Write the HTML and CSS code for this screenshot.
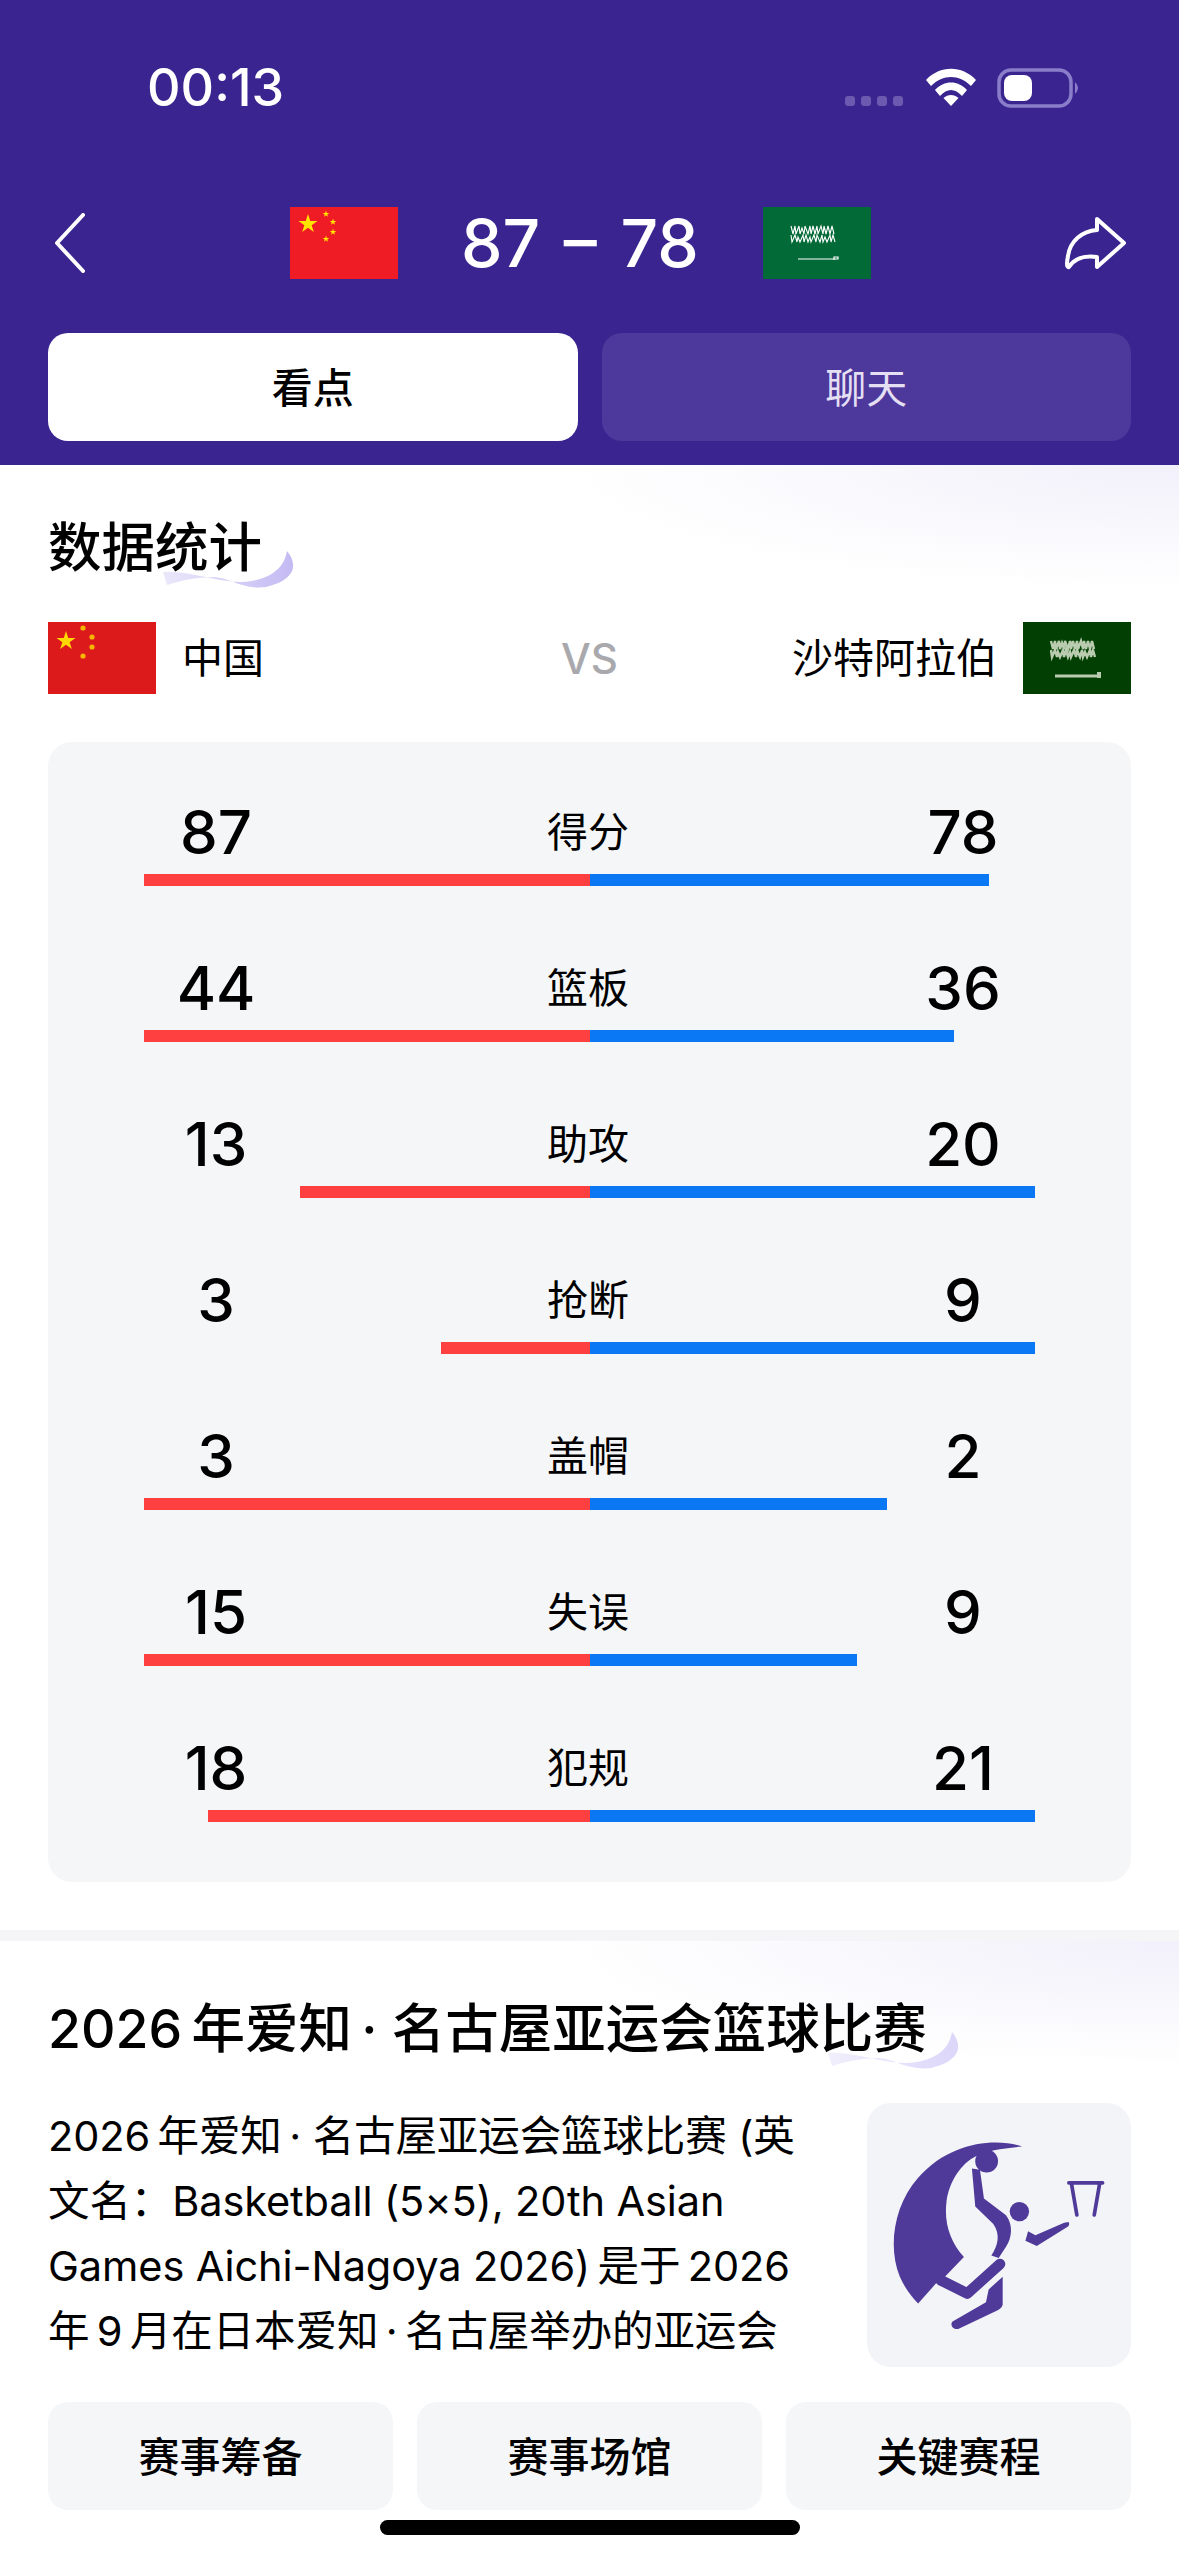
FILE: index.html
```html
<!DOCTYPE html>
<html lang="zh-CN">
<head>
<meta charset="utf-8">
<title>87 - 78</title>
<link rel="stylesheet" href="styles.css">
</head>
<body>
<svg class="defs" width="0" height="0"><defs><polygon id="star" points="0,-1 .225,-.309 .951,-.309 .363,.118 .588,.809 0,.382 -.588,.809 -.363,.118 -.951,-.309 -.225,-.309"/><path id="shahada" d="M28 19 l2 8 l2 -8 l1 8 l3 -8 l1 8 l2 -6 l2 6 l1 -8 l3 8 l2 -8 l1 8 l2 -8 l2 8 l2 -8 l1 8 l3 -8 l2 8 l1 -8 l2 8 l2 -8 l2 8 l2 -8 l2 8 M28 28 l1 7 l3 -7 l2 7 l1 -5 l2 5 l3 -7 l1 7 l2 -7 l2 7 l2 -5 l1 5 l3 -7 l2 7 l1 -7 l3 7 l2 -7 l1 7 l2 -5 l2 5 l3 -7 l1 7 l2 -7 l2 7"/></defs></svg>
<div class="page">
  <header class="top">
    <div class="status">
      <span class="time">00:13</span>
      <div class="status-icons">
        <div class="signal"><i></i><i></i><i></i><i></i></div>
        <svg class="wifi" viewBox="0 0 50 38"><path fill="#fff" d="M0 12 C14 -3 36 -3 50 12 L45 18 C33 6 17 6 5 18Z M9 22 C18 12 32 12 41 22 L36 28 C29 20 21 20 14 28Z M17.500 30 C22 26 28 26 32.500 30 L25 38Z"/></svg>
        <svg class="battery" viewBox="0 0 84 40"><rect x="2" y="2" width="72" height="36" rx="12" fill="none" stroke="#8a7dc9" stroke-width="3.500"/><rect x="7" y="7" width="28" height="26" rx="8" fill="#fff"/><path fill="#8a7dc9" d="M78 14 Q84 20 78 26Z"/></svg>
      </div>
    </div>
    <nav class="nav">
      <svg class="back" viewBox="0 0 32 60"><path d="M29 2 L3 30 L29 58" fill="none" stroke="#fff" stroke-width="4" stroke-linecap="round" stroke-linejoin="round"/></svg>
      <div class="score">
        <svg class="flag" viewBox="0 0 108 72"><rect width="108" height="72" fill="#f01c25"/><g fill="#ffe600"><use href="#star" transform="translate(18 17) scale(10)"/><use href="#star" transform="translate(36 7) scale(3.500)"/><use href="#star" transform="translate(43 15) scale(3.500)"/><use href="#star" transform="translate(43 25) scale(3.500)"/><use href="#star" transform="translate(36 32) scale(3.500)"/></g></svg>
        <span class="score-text">87 – 78</span>
        <svg class="flag" viewBox="0 0 108 72"><rect width="108" height="72" fill="#026a37"/><g fill="none" stroke="#fff"><use href="#shahada" stroke-width="1.100"/><path d="M35 52 H75 V50 H71 V53" stroke-width="1.200"/></g></svg>
      </div>
      <svg class="share" viewBox="0 0 64 54"><path d="M33 3 L60 27 L33 51 V41 C20 39 10 43 5 51 C2 52 3 45 4 40 C6 25 18 15 33 14 Z" fill="none" stroke="#fff" stroke-width="4" stroke-linejoin="round"/></svg>
    </nav>
    <div class="tabs">
      <div class="tab tab-active">看点</div>
      <div class="tab tab-plain">聊天</div>
    </div>
  </header>

  <section class="panel">
    <h2 class="title"><span class="title-text">数据统计</span>
      <svg class="swoosh" viewBox="0 0 135 38"><defs><linearGradient id="sw1" x1="0" x2="1"><stop offset="0" stop-color="#ebe8fb"/><stop offset="1" stop-color="#c4baf3"/></linearGradient></defs><path fill="url(#sw1)" d="M1 22 C30 20 62 36 90 31 C110 27 122 18 125 1 C136 14 134 30 104 37 C80 40 66 27 52 27 C36 27 20 30 5 35Z"/></svg>
    </h2>
    <div class="teams">
      <div class="team">
        <svg class="flag" viewBox="0 0 108 72"><rect width="108" height="72" fill="#dc1a1c"/><use href="#star" fill="#ffd800" transform="translate(18 19) scale(10)"/><g fill="#f6b500"><circle cx="35" cy="6" r="2.600"/><circle cx="44" cy="15" r="2.600"/><circle cx="44" cy="25" r="2.600"/><circle cx="35" cy="34" r="2.600"/></g></svg>
        <span class="team-name">中国</span>
      </div>
      <span class="vs">VS</span>
      <div class="team team-end">
        <span class="team-name">沙特阿拉伯</span>
        <svg class="flag" viewBox="0 0 108 72"><rect width="108" height="72" fill="#013f02"/><g fill="none" stroke="#b9ccb0"><use href="#shahada" stroke-width="2.400"/><path d="M32 54 H76" stroke-width="3"/></g><path d="M74 50 h4 v6 h-4z" fill="#b9ccb0"/></svg>
      </div>
    </div>
    <div class="stats">
      <div class="stat"><div class="stat-head"><span class="num">87</span><span class="stat-label">得分</span><span class="num">78</span></div>
        <div class="bar"><div class="half half-left"><b class="fill-red" style="width:100%"></b></div><div class="half"><b class="fill-blue" style="width:89.700%"></b></div></div></div>
      <div class="stat"><div class="stat-head"><span class="num">44</span><span class="stat-label">篮板</span><span class="num">36</span></div>
        <div class="bar"><div class="half half-left"><b class="fill-red" style="width:100%"></b></div><div class="half"><b class="fill-blue" style="width:81.800%"></b></div></div></div>
      <div class="stat"><div class="stat-head"><span class="num">13</span><span class="stat-label">助攻</span><span class="num">20</span></div>
        <div class="bar"><div class="half half-left"><b class="fill-red" style="width:65%"></b></div><div class="half"><b class="fill-blue" style="width:100%"></b></div></div></div>
      <div class="stat"><div class="stat-head"><span class="num">3</span><span class="stat-label">抢断</span><span class="num">9</span></div>
        <div class="bar"><div class="half half-left"><b class="fill-red" style="width:33.300%"></b></div><div class="half"><b class="fill-blue" style="width:100%"></b></div></div></div>
      <div class="stat"><div class="stat-head"><span class="num">3</span><span class="stat-label">盖帽</span><span class="num">2</span></div>
        <div class="bar"><div class="half half-left"><b class="fill-red" style="width:100%"></b></div><div class="half"><b class="fill-blue" style="width:66.700%"></b></div></div></div>
      <div class="stat"><div class="stat-head"><span class="num">15</span><span class="stat-label">失误</span><span class="num">9</span></div>
        <div class="bar"><div class="half half-left"><b class="fill-red" style="width:100%"></b></div><div class="half"><b class="fill-blue" style="width:60%"></b></div></div></div>
      <div class="stat"><div class="stat-head"><span class="num">18</span><span class="stat-label">犯规</span><span class="num">21</span></div>
        <div class="bar"><div class="half half-left"><b class="fill-red" style="width:85.700%"></b></div><div class="half"><b class="fill-blue" style="width:100%"></b></div></div></div>
    </div>
  </section>

  <div class="divider"></div>

  <section class="panel panel-info">
    <h2 class="title"><span class="title-text">2026&#8201;年爱知&#8201;·&nbsp;名古屋亚运会篮球比赛</span>
      <svg class="swoosh" viewBox="0 0 135 38"><defs><linearGradient id="sw2" x1="0" x2="1"><stop offset="0" stop-color="#f1effc"/><stop offset="1" stop-color="#dcd6f9"/></linearGradient></defs><path fill="url(#sw2)" d="M1 22 C30 20 62 36 90 31 C110 27 122 18 125 1 C136 14 134 30 104 37 C80 40 66 27 52 27 C36 27 20 30 5 35Z"/></svg>
    </h2>
    <div class="intro">
      <p class="intro-text">2026&#8201;年爱知&#8201;·&nbsp;名古屋亚运会篮球比赛 (英文名：Basketball (5×5), 20th Asian Games Aichi-Nagoya 2026)&#8201;是于&#8201;2026 年&#8201;9&#8201;月在日本爱知&#8201;·&#8201;名古屋举办的亚运会</p>
      <div class="logo-tile">
        <svg class="logo" viewBox="52 36 790 790">
          <g fill="#4f3a9a">
            <path d="M516 166 C440 140 300 150 205 260 C130 345 115 470 150 555 C165 590 185 615 205 636 L262 572 L285 556 L342 497 C300 450 282 395 290 330 C298 270 335 215 378 195 C410 178 460 172 516 166Z"/>
            <circle cx="410" cy="210" r="34"/>
            <circle cx="508" cy="361" r="29"/>
            <path d="M366 232 L390 236 L402 322 L468 372 C490 400 486 440 468 466 L446 500 L424 492 C444 462 452 430 430 398 L376 346Z"/>
            <path d="M655 392 C660 400 655 405 650 408 L560 464 L526 448 L534 420 L556 432 L642 394Z"/>
            <path d="M458 556 L458 640 C455 650 448 654 440 658 L325 712 C312 716 298 700 308 690 L408 632 L416 594Z"/>
          </g>
          <path d="M450 518 L352 606 L272 566" fill="none" stroke="#4f3a9a" stroke-width="32" stroke-linecap="round" stroke-linejoin="round"/>
          <path d="M656 275 H757 M664 278 L680 371 M748 278 L732 371" fill="none" stroke="#4f3a9a" stroke-width="11" stroke-linecap="round"/>
        </svg>
      </div>
    </div>
    <div class="links">
      <div class="link">赛事筹备</div>
      <div class="link">赛事场馆</div>
      <div class="link">关键赛程</div>
    </div>
  </section>

  <div class="home-bar"></div>
</div>
</body>
</html>
```

FILE: styles.css
```css
* { box-sizing: border-box; }
html, body { margin: 0; padding: 0; background: #fff; }
body {
  font-family: Inter, "Noto Sans CJK SC", "Noto Sans", sans-serif;
  color: #000;
}
.defs { position: absolute; }
.page { position: relative; width: 1179px; height: 2556px; overflow: hidden; background: #fff; }

/* Header */
.top { background: #3a2590; height: 465px; padding: 0 48px; }
.status { display: flex; align-items: flex-start; height: 207px; padding-left: 99px; }
.time { color: #fff; font-size: 52px; line-height: 60px; font-weight: 500; margin-top: 58px; }
.status-icons { margin-left: auto; margin-top: 68px; margin-right: 50px; display: flex; align-items: flex-start; }
.signal { display: flex; gap: 6px; margin-top: 28px; margin-right: 23px; }
.signal i { display: block; width: 10px; height: 10px; border-radius: 3px; background: #6b5bb0; }
.wifi { display: block; width: 50px; height: 38px; margin-right: 21px; }
.battery { display: block; width: 84px; height: 40px; }

.nav { display: flex; align-items: center; height: 72px; }
.back { display: block; width: 32px; height: 60px; margin-left: 6px; flex: none; }
.score { display: flex; align-items: center; gap: 64px; margin-left: 204px; }
.flag { display: block; width: 108px; height: 72px; flex: none; }
.score-text { color: #fff; font-size: 66px; line-height: 72px; font-weight: 500; word-spacing: 6px; white-space: pre; margin-left: -1px; }
.share { display: block; width: 64px; height: 54px; margin-left: auto; margin-right: 3px; flex: none; }

.tabs { display: grid; grid-template-columns: 1fr 1fr; gap: 24px; margin-top: 54px; }
.tab { height: 108px; padding-bottom: 5px; border-radius: 20px; display: flex; align-items: center; justify-content: center; font-size: 41px; }
.tab-active { background: #fff; color: #000; font-weight: 500; }
.tab-plain { background: #4d389b; color: #e4dff3; }

/* Panels */
.panel {
  padding: 47px 48px 48px;
  background-image: radial-gradient(ellipse 620px 125px at 100% 0, #f2f0fa 0%, rgba(242, 240, 250, 0) 100%);
  background-repeat: no-repeat;
}
.panel-info { padding-top: 52px; padding-bottom: 0; }
.title { display: block; width: fit-content; position: relative; margin: 0; font-size: 53.500px; line-height: 72px; font-weight: 500; white-space: nowrap; }
.title-text { position: relative; z-index: 1; }
.swoosh { position: absolute; right: -35px; top: 38px; width: 135px; height: 38px; }

.teams { display: grid; grid-template-columns: 1fr auto 1fr; align-items: center; margin-top: 38px; height: 72px; }
.team { display: flex; align-items: center; gap: 26px; height: 72px; }
.team-end { justify-content: flex-end; }
.team-name { font-size: 41px; line-height: 72px; }
.vs { text-align: center; color: #a9a9ad; font-size: 42px; font-weight: 500; }

.stats { margin-top: 48px; background: #f5f6f8; border-radius: 24px; padding: 54px 96px 60px; display: flex; flex-direction: column; gap: 66px; }
.stat-head { display: grid; grid-template-columns: 144px 1fr 144px; align-items: center; height: 72px; }
.num { text-align: center; font-size: 60px; line-height: 72px; font-weight: 450; }
.stat-label { text-align: center; font-size: 41px; line-height: 72px; padding-right: 3px; }
.bar { display: grid; grid-template-columns: 1fr 1fr; height: 12px; margin-top: 6px; }
.half { display: flex; }
.half-left { justify-content: flex-end; }
.fill-red { display: block; height: 12px; background: #ff4040; }
.fill-blue { display: block; height: 12px; background: #0a78f5; }

.divider { height: 11px; background: #f5f5f7; }

.intro { display: flex; justify-content: space-between; align-items: flex-start; margin-top: 38px; }
.intro-text { margin: 0; width: 770px; padding-top: 1px; font-size: 41.500px; line-height: 65px; letter-spacing: -0.100px; }
.logo-tile { width: 264px; height: 264px; background: #f3f4f7; border-radius: 24px; flex: none; }
.logo { display: block; width: 264px; height: 264px; }

.links { display: grid; grid-template-columns: repeat(3, 1fr); gap: 24px; margin-top: 35px; }
.link { height: 108px; padding-bottom: 5px; background: #f5f6f8; border-radius: 20px; display: flex; align-items: center; justify-content: center; font-size: 41px; font-weight: 500; }

.home-bar { position: absolute; left: 380px; top: 2520px; width: 420px; height: 15px; border-radius: 8px; background: #000; }
```
